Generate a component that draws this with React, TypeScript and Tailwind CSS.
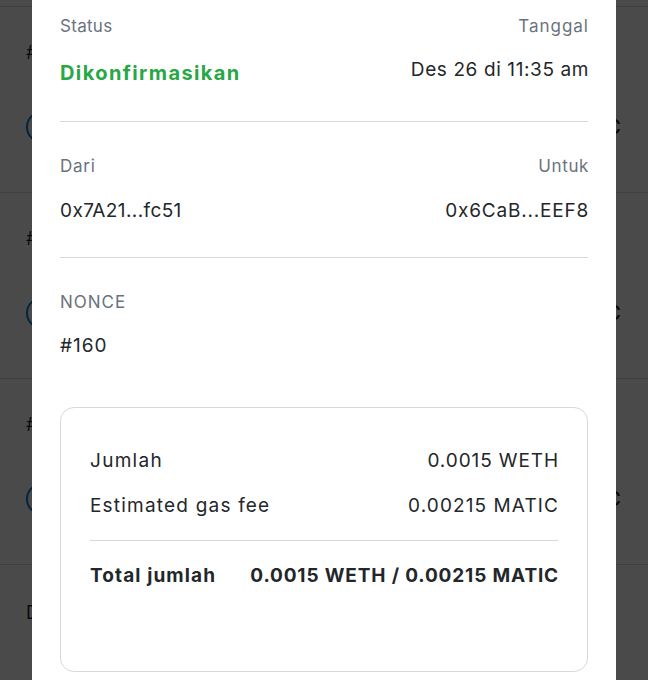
import React from "react";

const font = { fontFamily: '"Inter", "Noto Sans", sans-serif' };

const bgRows = ["r1", "r2", "r3"];

const BackgroundList: React.FC = () => {
    return (
        <div className="w-full bg-white">
            <div className="h-[7px] border-b border-[#d6d9dc]" />
            {bgRows.map((id) => (
                <div key={id} className="h-[186px] border-b border-[#d6d9dc] pl-[26px] pr-[27px]">
                    <div className="pt-[34px] text-[18px] leading-6 text-[#24272a]">#</div>
                    <div className="mt-[46px] flex items-center justify-between">
                        <div className="w-8 h-8 rounded-full border-2 border-[#037dd6]" />
                        <div className="text-[20px] font-medium text-[#24272a]">C</div>
                    </div>
                </div>
            ))}
            <div className="h-[120px] pl-[26px] pt-[36px] text-[18px] leading-6 text-[#24272a]">D</div>
        </div>
    );
};

interface LabelValueProps {
    label: string;
    value: string;
    gap: string;
    right?: boolean;
    labelClass: string;
    valueClass: string;
}

const LabelValue: React.FC<LabelValueProps> = ({ label, value, gap, right, labelClass, valueClass }) => (
    <div className={right ? "flex flex-col items-end" : "flex flex-col items-start"}>
        <div className={`text-[17px] leading-6 text-[#6a737d] ${labelClass}`}>{label}</div>
        <div className={`${gap} leading-6 ${valueClass}`}>{value}</div>
    </div>
);

const TransactionDetails: React.FC = () => {
    return (
        <div className="absolute left-[32px] top-0 bottom-0 w-[584px] bg-white px-[28px]">
            <div className="flex justify-between pt-[14px] pb-[36px] border-b border-[#d6d9dc]">
                <LabelValue
                    label="Status"
                    value="Dikonfirmasikan"
                    gap="mt-[23px]"
                    labelClass="tracking-[0.3px]"
                    valueClass="text-[20px] font-bold tracking-[1.4px] text-[#28a745]"
                />
                <LabelValue
                    label="Tanggal"
                    value="Des 26 di 11:35 am"
                    gap="mt-[20px]"
                    right
                    labelClass="tracking-[1px] -mr-[1px]"
                    valueClass="text-[19px] tracking-[0.6px] -mr-[1px] text-[#24272a]"
                />
            </div>

            <div className="flex justify-between pt-[32px] pb-[34px] border-b border-[#d6d9dc]">
                <LabelValue
                    label="Dari"
                    value="0x7A21...fc51"
                    gap="mt-[21px]"
                    labelClass="tracking-[0.75px]"
                    valueClass="text-[19px] tracking-[0.4px] text-[#24272a]"
                />
                <LabelValue
                    label="Untuk"
                    value="0x6CaB...EEF8"
                    gap="mt-[21px]"
                    right
                    labelClass="tracking-[0.6px] -mr-[1px]"
                    valueClass="text-[19px] tracking-[0.8px] -mr-[1px] text-[#24272a]"
                />
            </div>

            <div className="pt-[32px]">
                <LabelValue
                    label="NONCE"
                    value="#160"
                    gap="mt-[20px]"
                    labelClass="tracking-[1px]"
                    valueClass="text-[19px] tracking-[1px] text-[#24272a]"
                />
            </div>

            <div className="mt-[49px] h-[265px] rounded-[14px] border border-[#d6d9dc] px-[29px] pt-[41px]">
                <div className="flex justify-between text-[19px] leading-6 text-[#24272a]">
                    <span className="tracking-[1.3px]">Jumlah</span>
                    <span className="tracking-[0.9px] -mr-[1px]">0.0015 WETH</span>
                </div>
                <div className="mt-[21px] flex justify-between text-[19px] leading-6 text-[#24272a]">
                    <span className="tracking-[1.2px]">Estimated gas fee</span>
                    <span className="tracking-[1.1px] -mr-[1px]">0.00215 MATIC</span>
                </div>
                <div className="mt-[22px] border-t border-[#d6d9dc]" />
                <div className="mt-[23px] flex justify-between text-[19px] leading-6 font-bold text-[#24272a]">
                    <span className="tracking-[1.1px]">Total jumlah</span>
                    <span className="tracking-[0.85px] -mr-[1px]">0.0015 WETH / 0.00215 MATIC</span>
                </div>
            </div>
        </div>
    );
};

export default function App() {
    return (
        <div className="relative w-[648px] h-[680px] overflow-hidden" style={font}>
            <BackgroundList />
            <div className="absolute inset-0 bg-black/[0.71]" />
            <TransactionDetails />
        </div>
    );
}
